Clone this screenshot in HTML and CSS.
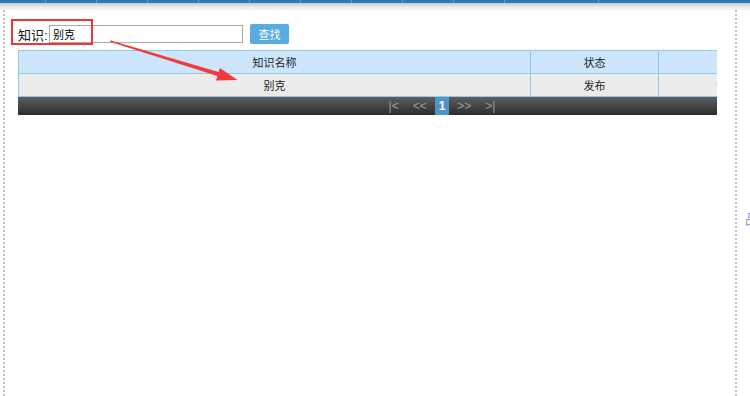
FILE: index.html
```html
<!DOCTYPE html>
<html lang="zh">
<head>
  <meta charset="UTF-8" />
  <title>知识查询</title>
  <link rel="stylesheet" href="styles.css">
</head>
<body>
  <div class="topbar">
    <span class="tab w46"></span>
    <span class="tab"></span>
    <span class="tab"></span>
    <span class="tab"></span>
    <span class="tab"></span>
    <span class="tab"></span>
    <span class="tab"></span>
    <span class="tab"></span>
    <span class="tab"></span>
    <span class="tab"></span>
    <span class="tab wide"></span>
    <span class="tab last"></span>
  </div>
  <div class="shade"></div>

  <div class="page">
    <div class="frame">
      <div class="search">
        <label class="search-label">知识:</label>
        <input class="search-input" type="text" value="别克">
        <button class="search-btn">查找</button>
      </div>

      <div class="grid-wrap">
        <table class="grid">
          <thead>
            <tr>
              <th class="col-name">知识名称</th>
              <th class="col-state">状态</th>
              <th class="col-op">操作</th>
            </tr>
          </thead>
          <tbody>
            <tr>
              <td>别克</td>
              <td>发布</td>
              <td class="op-cell"><span class="op-link">修改 | 删除</span></td>
            </tr>
          </tbody>
        </table>
        <div class="pager">
          <span class="pg">|&lt;</span>
          <span class="pg">&lt;&lt;</span>
          <span class="pg current">1</span>
          <span class="pg">&gt;&gt;</span>
          <span class="pg">&gt;|</span>
        </div>
      </div>
    </div>
    <div class="side-mark">品</div>
  </div>

  <!-- annotation: highlight box and arrow -->
  <div class="mark-box"></div>
  <svg class="mark-arrow" width="750" height="120" viewBox="0 0 750 120">
    <polygon points="110,40.3 218.6,72.1 220,68 237.5,80 216,80.5 217.4,76 110,41.7" fill="#f23a3a"/>
  </svg>
</body>
</html>
```

FILE: styles.css
```css
* {
  box-sizing: border-box;
  margin: 0;
  padding: 0;
}

body {
  width: 750px;
  height: 396px;
  overflow: hidden;
  background: #fff;
  font-family: "Liberation Sans", "Noto Sans CJK SC", sans-serif;
  font-size: 12px;
  color: #222;
  position: relative;
}

.topbar {
  display: flex;
  height: 3px;
  background: #2a7cc1;
}

.tab {
  width: 51px;
  height: 3px;
  border-right: 1px solid #5a9bd0;
}

.tab.w46 {
  width: 46px;
}

.tab.wide {
  width: 94px;
}

.tab.last {
  flex: 1;
  border-right: none;
}

.shade {
  height: 7px;
  background: linear-gradient(#c9c9c9, #ececec 60%, #f6f6f6);
}

.page {
  display: flex;
  height: 386px;
}

.frame {
  flex: none;
  margin-left: 3px;
  width: 734px;
  border-left: 2px dotted #c3c3c3;
  border-right: 2px dotted #c3c3c3;
  padding: 14px 0 0 13px;
}

.search {
  display: flex;
  align-items: center;
  height: 20px;
}

.search-label {
  width: 31px;
  font-size: 13px;
  color: #111;
  white-space: nowrap;
}

.search-input {
  width: 194px;
  height: 18px;
  border: 1px solid #a9a9a9;
  padding: 0 3px;
  font-family: inherit;
  font-size: 11px;
  color: #000;
}

.search-btn {
  margin-left: 7px;
  width: 39px;
  height: 20px;
  border: none;
  border-radius: 2px;
  background: #58ace0;
  color: #fff;
  font-family: inherit;
  font-size: 11px;
}

.grid-wrap {
  margin-top: 6px;
  width: 699px;
  overflow: hidden;
}

.grid {
  width: 854px;
  border-collapse: collapse;
  table-layout: fixed;
}

.grid th,
.grid td {
  height: 23px;
  border: 1px solid #8fcbe2;
  text-align: center;
  font-weight: normal;
  font-size: 11px;
  white-space: nowrap;
}

.grid th {
  background: #cce5fb;
}

.grid td {
  background: #ececec;
}

.col-name {
  width: 512px;
}

.col-state {
  width: 128px;
}

.grid td.op-cell {
  text-align: left;
  padding-left: 57px;
}

.op-link {
  color: #e8a060;
}

.pager {
  display: flex;
  align-items: center;
  justify-content: center;
  width: 848px;
  height: 18px;
  background: linear-gradient(#5e5e5e, #2c2c2c);
}

.pg {
  color: #999;
  font-size: 12px;
  padding: 0 7px;
  line-height: 18px;
}

.pg.current {
  background: #4d94c8;
  color: #fff;
  font-weight: bold;
  padding: 0 4px;
  margin: 0 1px;
}

.side-mark {
  flex: none;
  margin: 198px 0 0 8px;
  color: #a58be0;
  font-size: 14px;
  font-family: "Noto Sans CJK SC", sans-serif;
}

.mark-box {
  position: absolute;
  left: 11px;
  top: 19px;
  width: 82px;
  height: 26px;
  border: 2px solid #ee3838;
}

.mark-arrow {
  position: absolute;
  left: 0;
  top: 0;
}
```
